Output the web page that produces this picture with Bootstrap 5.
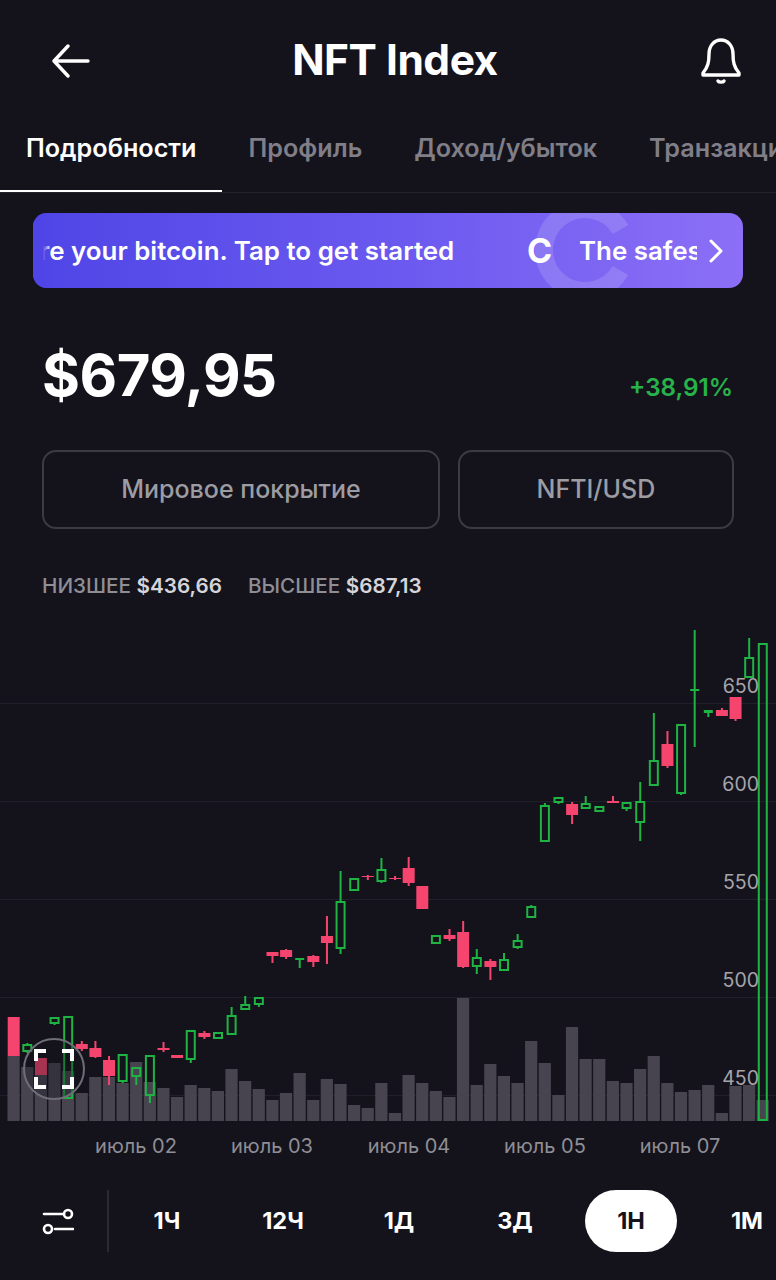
<!DOCTYPE html>
<html lang="ru">
<head>
  <meta charset="utf-8">
  <meta name="viewport" content="width=device-width, initial-scale=1">
  <title>NFT Index</title>
  <link href="https://cdn.jsdelivr.net/npm/bootstrap@5.3.3/dist/css/bootstrap.min.css" rel="stylesheet">
  <style>
    html, body { height: 100%; }
    body {
      background: #14131c;
      color: #fff;
      font-family: Inter, Roboto, "Noto Sans", sans-serif;
      overflow: hidden;
      width: 776px;
      height: 1280px;
    }
    .top-head { height: 122px; padding: 0 34px 0 52px; }
    .top-title { font-size: 42.5px; font-weight: 700; letter-spacing: -.5px; line-height: 1; margin-bottom: 2px; }
    .tab-strip { height: 71px; border-bottom: 1px solid #24232c; overflow: hidden; white-space: nowrap; }
    .tab-item { font-size: 25.2px; font-weight: 600; color: #807e87; padding: 0 26px; margin-bottom: -1px; line-height: 52px; height: 70px; flex: none; }
    .tab-item.is-on { color: #fff; border-bottom: 2px solid #fff; }
    .promo {
      height: 75px; margin: 20px 33px 0;
      border-radius: 14px; overflow: hidden; position: relative;
      background: linear-gradient(90deg, #4f45e6 0%, #6d5bf0 55%, #8c6ff6 100%);
      font-size: 25.9px; font-weight: 600;
    }
    .promo-ring { position: absolute; left: 502px; top: -13px; width: 100px; height: 100px; }
    .promo-text { position: absolute; top: 0; line-height: 75px; white-space: nowrap; }
    .promo-fade { position: absolute; left: 0; top: 0; width: 18px; height: 75px; background: linear-gradient(90deg, #4f45e6 55%, rgba(79,69,230,0)); }
    .price-row { padding: 52px 43px 0 42px; height: 162px; }
    .price-val { font-size: 58px; font-weight: 700; line-height: 70px; letter-spacing: -.5px; }
    .price-chg { font-size: 24.2px; font-weight: 600; color: #27b24a; margin-top: 30px; }
    .tag-row { padding: 0 42px; gap: 18px; height: 79px; }
    .tag-box {
      border: 2px solid #3c3b44; border-radius: 14px;
      color: #9d9ca3; font-size: 25px; font-weight: 500;
      display: flex; align-items: center; justify-content: center;
    }
    .range-row { padding: 41px 42px 0; font-size: 20.7px; font-weight: 500; color: #8f8e95; gap: 26px; }
    .range-row b { color: #d6d5d9; font-weight: 600; }
    .chart-wrap { position: absolute; left: 0; top: 620px; width: 776px; height: 550px; }
    .chart-wrap svg { display: block; }
    .y-tick, .x-tick { position: absolute; font-size: 19.5px; line-height: 24px; color: #a5a4aa; font-weight: 400; }
    .y-tick { right: 17px; }
    .x-tick { font-size: 20px; color: #8f8e95; transform: translateX(-50%); top: 514px; white-space: nowrap; }
    .zoom-btn {
      position: absolute; left: 23px; top: 418px; width: 62px; height: 62px;
      border: 2px solid #6f6e76; border-radius: 50%;
      background: rgba(20,19,28,.35);
    }
    .bottom-bar { position: absolute; left: 0; top: 1170px; width: 776px; height: 110px; }
    .bar-ico { width: 109px; height: 62px; border-right: 2px solid #2b2a33; margin-top: 20px; flex: none; padding-left: 8px; }
    .range-btn { position: absolute; top: 20px; height: 62px; border-radius: 31px; font-size: 23.5px; font-weight: 700; line-height: 62px; text-align: center; transform: translateX(-50%); width: 92px; }
    .range-btn.is-on { background: #fff; color: #14131c; }
  </style>
</head>
<body>

<div class="top-head d-flex align-items-center justify-content-between">
  <svg width="38" height="34" viewBox="0 0 38 34" fill="none" stroke="#fff" stroke-width="3.4" stroke-linecap="round" stroke-linejoin="round"><path d="M36 17H3M16 2 2 17l14 15"/></svg>
  <div class="top-title">NFT Index</div>
  <svg width="42" height="46" viewBox="0 0 42 46" fill="none" stroke="#fff" stroke-width="3.4" stroke-linecap="round" stroke-linejoin="round"><path d="M21 2c-7 0-12 6-12 14 0 8-1 13-6 19v2h36v-2c-5-6-6-11-6-19 0-8-5-14-12-14Z"/><path d="M18 43c1 1.500 5 1.500 6 0"/></svg>
</div>

<div class="tab-strip d-flex">
  <div class="tab-item is-on">Подробности</div>
  <div class="tab-item">Профиль</div>
  <div class="tab-item">Доход/убыток</div>
  <div class="tab-item">Транзакции</div>
</div>

<div class="promo">
  <svg class="promo-ring" viewBox="0 0 100 100" fill="none" stroke="#fff" stroke-opacity=".14" stroke-width="18"><path d="M85.500 29.500A41 41 0 1 0 85.500 70.500"/></svg>
  <div class="promo-text" style="left:-35px">Store your bitcoin. Tap to get started</div>
  <div class="promo-fade"></div>
  <div class="promo-text" style="left:494px;font-weight:700;font-size:34px">C</div>
  <div class="promo-text" style="left:546px;width:118px;overflow:hidden">The safest way</div>
  <svg class="position-absolute" style="left:676px;top:26px" width="14" height="24" viewBox="0 0 14 24" fill="none" stroke="#fff" stroke-width="3" stroke-linecap="round" stroke-linejoin="round"><path d="M2 2l10 10L2 22"/></svg>
</div>

<div class="price-row d-flex justify-content-between align-items-start">
  <div class="price-val">$679,95</div>
  <div class="price-chg">+38,91%</div>
</div>

<div class="tag-row d-flex">
  <div class="tag-box" style="width:399px">Мировое покрытие</div>
  <div class="tag-box" style="width:277px">NFTI/USD</div>
</div>

<div class="range-row d-flex">
  <div>НИЗШЕЕ <b>$436,66</b></div>
  <div>ВЫСШЕЕ <b>$687,13</b></div>
</div>

<div class="chart-wrap">
  <svg id="chart" width="776" height="550" viewBox="0 620 776 550"></svg>
  <div class="y-tick" style="top:54px">650</div>
  <div class="y-tick" style="top:152px">600</div>
  <div class="y-tick" style="top:250px">550</div>
  <div class="y-tick" style="top:348px">500</div>
  <div class="y-tick" style="top:446px">450</div>
  <div class="x-tick" style="left:136px">июль 02</div>
  <div class="x-tick" style="left:272px">июль 03</div>
  <div class="x-tick" style="left:409px">июль 04</div>
  <div class="x-tick" style="left:545px">июль 05</div>
  <div class="x-tick" style="left:680px">июль 07</div>
  <div class="zoom-btn">
    <svg class="position-absolute" style="left:8px;top:8px" width="42" height="42" viewBox="0 0 42 42" fill="none" stroke="#fff" stroke-width="4"><path d="M13 3H3v10M29 3h10v10M13 39H3V29M29 39h10V29"/></svg>
  </div>
</div>

<div class="bottom-bar d-flex">
  <div class="bar-ico d-flex align-items-center justify-content-center">
    <svg width="32" height="28" viewBox="0 0 32 28" fill="none" stroke="#fff" stroke-width="2.600" stroke-linecap="round"><path d="M2 7h20M13 22h18"/><circle cx="26" cy="7" r="4"/><circle cx="6" cy="22" r="4"/></svg>
  </div>
  <div class="range-btn" style="left:167px">1Ч</div>
  <div class="range-btn" style="left:283px">12Ч</div>
  <div class="range-btn" style="left:399px">1Д</div>
  <div class="range-btn" style="left:515px">3Д</div>
  <div class="range-btn is-on" style="left:631px">1Н</div>
  <div class="range-btn" style="left:747px">1М</div>
</div>

<script>
  var PINK = "#f5446e";
  var GREEN = "#1fb344";

  // tops of the volume bars, one per candle
  var vols = [1056,1067,1073,1063,1071,1093,1077,1077,1083,1062,1082,1088,1097,1085,1088,1091,1069,1081,1089,1100,1093,1073,1100,1079,1084,1105,1108,1083,1113,1075,1083,1091,1097,998,1085,1064,1076,1083,1041,1063,1095,1027,1059,1059,1081,1083,1069,1056,1083,1092,1090,1085,1113,1086,1085,1100];

  // type, body top, body bottom, wick top, wick bottom ("p" filled pink, "g" hollow green, "f" filled green)
  var candles = [
    ["p",1017,1056,1017,1056],["g",1045,1051,1043,1053],["p",1058,1075,1058,1075],["g",1018,1023,1017,1025],
    ["g",1017,1098,1017,1098],["p",1044,1049,1041,1051],["p",1048,1057,1041,1058],["p",1060,1076,1056,1085],
    ["g",1055,1081,1055,1083],["g",1068,1076,1068,1085],["g",1056,1095,1056,1103],["p",1048,1050,1042,1052],
    ["p",1055,1058,1055,1058],["g",1031,1059,1031,1063],["p",1033,1037,1031,1039],["g",1033,1038,1033,1038],
    ["g",1016,1034,1007,1035],["g",1005,1009,996,1009],["g",998,1004,998,1007],
    ["p",952,956,952,963],["p",950,957,949,959],["f",958,960,958,968],["p",956,962,955,967],["p",936,943,916,964],
    ["g",902,948,871,954],["g",879,890,879,890],["p",876,877,875,880],["g",870,881,858,883],["p",878,879,876,880],
    ["p",868,883,857,886],["p",886,909,886,909],["g",936,943,935,943],["p",935,939,929,941],["p",932,967,921,968],
    ["g",958,966,949,974],["p",961,967,959,980],["g",960,970,953,971],["g",941,947,934,949],["g",907,917,905,917],
    ["g",806,841,803,841],["g",798,802,798,804],["p",804,815,802,824],["g",804,808,796,808],["g",807,811,807,811],
    ["p",801,803,796,803],["g",803,808,803,811],["g",802,822,782,841],["g",761,785,713,785],["p",744,766,731,768],
    ["g",725,793,725,795],["f",689,691,630,747],["f",710,713,710,717],["p",710,716,708,716],["p",697,719,697,721],
    ["g",658,677,638,677],["g",644,1120,644,1120]
  ];

  var svgNs = "http://www.w3.org/2000/svg";
  var chart = document.getElementById("chart");

  function addRect(x, y, w, h, fill, stroke) {
    var r = document.createElementNS(svgNs, "rect");
    r.setAttribute("x", x);
    r.setAttribute("y", y);
    r.setAttribute("width", w);
    r.setAttribute("height", h);
    r.setAttribute("fill", fill);
    if (stroke) {
      r.setAttribute("stroke", stroke);
      r.setAttribute("stroke-width", 2);
    }
    chart.appendChild(r);
  }

  [703, 801, 899, 997, 1095].forEach(function (y) {
    addRect(0, y, 776, 1, "#211f29");
  });

  vols.forEach(function (top, i) {
    addRect(7.5 + 13.62 * i, top, 12.2, 1121 - top, "#474450");
  });

  candles.forEach(function (c, i) {
    var cx = 13.7 + 13.62 * i;
    var color = c[0] == "p" ? PINK : GREEN;
    var wickW = 2;
    if (c[3] < c[1]) addRect(cx - wickW / 2, c[3], wickW, c[1] - c[3], color);
    if (c[4] > c[2]) addRect(cx - wickW / 2, c[2], wickW, c[4] - c[2], color);
    if (c[0] == "g") {
      addRect(cx - 4, c[1], 8, Math.max(c[2] - c[1], 2), "none", color);
    } else if (c[0] == "f") {
      addRect(cx - 4.5, c[1], 9, c[2] - c[1], color);
    } else {
      addRect(cx - 6, c[1], 12, c[2] - c[1], color);
    }
  });
</script>
</body>
</html>
